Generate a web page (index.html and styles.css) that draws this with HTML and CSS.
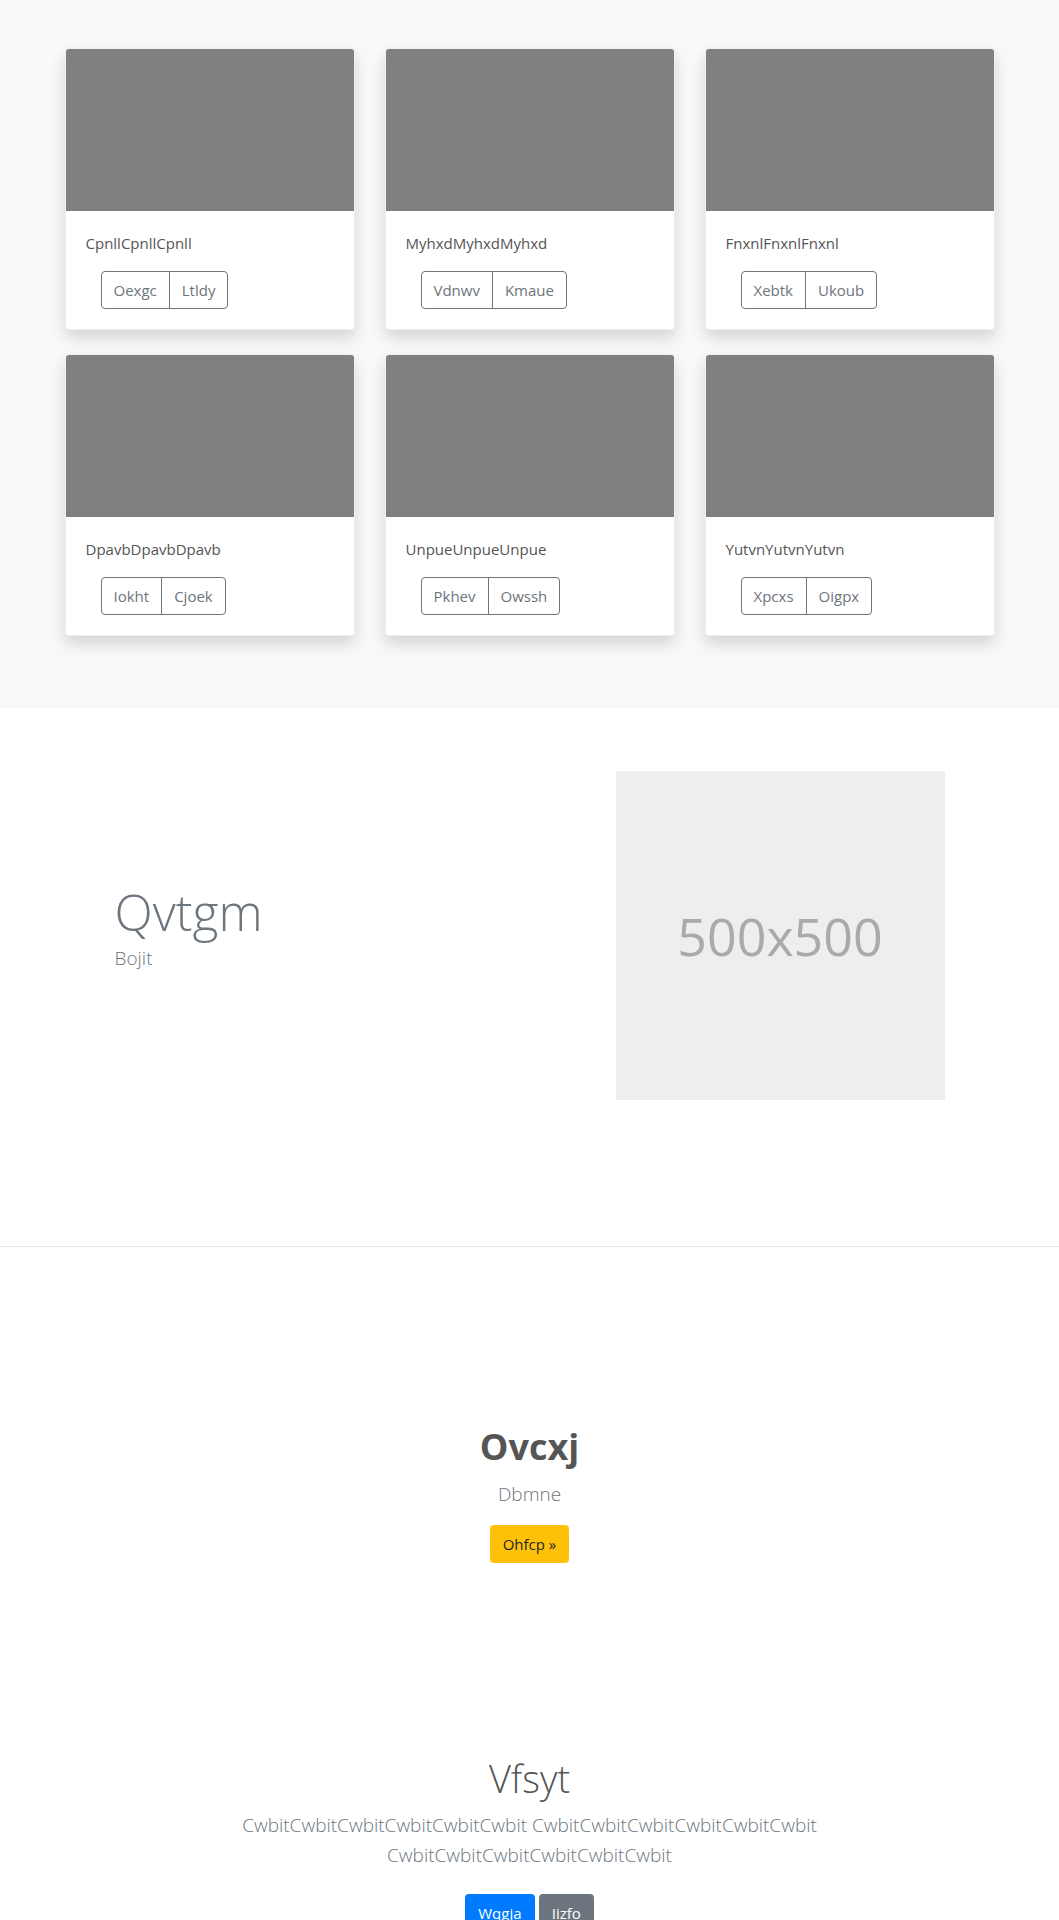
FILE: index.html
```html
<!DOCTYPE html>
<html lang="en">
<head>
    <meta charset="UTF-8">
    <meta name="viewport" content="width=device-width, initial-scale=1.0">
    <title>Album</title>
    <link rel="stylesheet" href="styles.css">
</head>
<body>

    <section class="album">
        <div class="container card-grid">
            <div class="card">
                <div class="card-img"></div>
                <div class="card-body">
                    <p class="card-text">CpnllCpnllCpnll</p>
                    <div class="btn-group">
                        <button class="btn btn-outline">Oexgc</button>
                        <button class="btn btn-outline">Ltldy</button>
                    </div>
                </div>
            </div>
            <div class="card">
                <div class="card-img"></div>
                <div class="card-body">
                    <p class="card-text">MyhxdMyhxdMyhxd</p>
                    <div class="btn-group">
                        <button class="btn btn-outline">Vdnwv</button>
                        <button class="btn btn-outline">Kmaue</button>
                    </div>
                </div>
            </div>
            <div class="card">
                <div class="card-img"></div>
                <div class="card-body">
                    <p class="card-text">FnxnlFnxnlFnxnl</p>
                    <div class="btn-group">
                        <button class="btn btn-outline">Xebtk</button>
                        <button class="btn btn-outline">Ukoub</button>
                    </div>
                </div>
            </div>
            <div class="card">
                <div class="card-img"></div>
                <div class="card-body">
                    <p class="card-text">DpavbDpavbDpavb</p>
                    <div class="btn-group">
                        <button class="btn btn-outline">Iokht</button>
                        <button class="btn btn-outline">Cjoek</button>
                    </div>
                </div>
            </div>
            <div class="card">
                <div class="card-img"></div>
                <div class="card-body">
                    <p class="card-text">UnpueUnpueUnpue</p>
                    <div class="btn-group">
                        <button class="btn btn-outline">Pkhev</button>
                        <button class="btn btn-outline">Owssh</button>
                    </div>
                </div>
            </div>
            <div class="card">
                <div class="card-img"></div>
                <div class="card-body">
                    <p class="card-text">YutvnYutvnYutvn</p>
                    <div class="btn-group">
                        <button class="btn btn-outline">Xpcxs</button>
                        <button class="btn btn-outline">Oigpx</button>
                    </div>
                </div>
            </div>
        </div>
    </section>

    <section class="feature">
        <div class="container feature-row">
            <div class="feature-text">
                <h2 class="feature-title">Qvtgm</h2>
                <p class="feature-sub">Bojit</p>
            </div>
            <div class="placeholder">500x500</div>
        </div>
    </section>

    <section class="cta">
        <h1 class="cta-title">Ovcxj</h1>
        <p class="lead">Dbmne</p>
        <a href="#" class="btn btn-warning">Ohfcp &raquo;</a>
    </section>

    <section class="jumbo">
        <div class="jumbo-inner">
            <h1 class="jumbo-title">Vfsyt</h1>
            <p class="lead">CwbitCwbitCwbitCwbitCwbitCwbit CwbitCwbitCwbitCwbitCwbitCwbit CwbitCwbitCwbitCwbitCwbitCwbit</p>
            <p class="jumbo-actions">
                <a href="#" class="btn btn-primary">Wqgja</a>
                <a href="#" class="btn btn-secondary">Iizfo</a>
            </p>
        </div>
    </section>

</body>
</html>
```

FILE: styles.css
```css
body {
    margin: 0;
    font-family: "Open Sans", "Noto Sans", sans-serif;
    font-size: 16px;
    line-height: 1.5;
    color: #212529;
    background: #fff;
}
h1, h2, p {
    margin: 0;
}
.container {
    width: 930px;
    margin: 0 auto;
}

/* album */
.album {
    background-color: #f8f9fa;
    padding: 48px 0 72px;
}
.card-grid {
    display: grid;
    grid-template-columns: repeat(3, 290px);
    column-gap: 30px;
    row-gap: 24px;
}
.card {
    background: #fff;
    border: 1px solid rgba(0, 0, 0, 0.06);
    border-radius: 4px;
    overflow: hidden;
    box-shadow: 0 8px 16px rgba(0, 0, 0, 0.15);
}
.card-img {
    height: 162px;
    background-color: #808080;
}
.card-body {
    padding: 20px;
}
.card-text {
    font-size: 15px;
    line-height: 24px;
    color: #555;
    margin-bottom: 16px;
}
.btn-group {
    display: inline-flex;
    margin-left: 15px;
}
.btn {
    display: inline-block;
    font-family: inherit;
    font-size: 15px;
    line-height: 24px;
    padding: 6px 12px;
    border: 1px solid transparent;
    border-radius: 4px;
    text-decoration: none;
    cursor: pointer;
}
.btn-outline {
    background: transparent;
    color: #6c757d;
    border-color: #6c757d;
}
.btn-group .btn:first-child {
    border-top-right-radius: 0;
    border-bottom-right-radius: 0;
}
.btn-group .btn:last-child {
    margin-left: -1px;
    border-top-left-radius: 0;
    border-bottom-left-radius: 0;
}

/* feature */
.feature {
    padding: 63px 0 146px;
    border-bottom: 1px solid #e5e5e5;
}
.feature-row {
    display: flex;
    align-items: center;
}
.feature-text {
    flex: 1;
    padding-left: 50px;
}
.feature-title {
    font-size: 50px;
    font-weight: 300;
    line-height: 1.2;
    color: #6c757d;
    margin-bottom: 2px;
}
.feature-sub {
    font-size: 19px;
    font-weight: 300;
    color: #6c757d;
    margin-bottom: 16px;
}
.placeholder {
    width: 329px;
    height: 329px;
    margin-right: 50px;
    background-color: #eee;
    color: #aaa;
    font-size: 52px;
    display: flex;
    align-items: center;
    justify-content: center;
}

/* call to action */
.cta {
    text-align: center;
    padding: 176px 0 0;
}
.cta-title {
    font-size: 36px;
    font-weight: 700;
    line-height: 48px;
    color: #555;
    margin-bottom: 8px;
}
.lead {
    font-size: 19px;
    font-weight: 300;
    line-height: 30px;
    color: #6c757d;
    margin-bottom: 16px;
}
.btn-warning {
    background-color: #ffc107;
    color: #212529;
}

/* jumbotron */
.jumbo {
    text-align: center;
    padding-top: 191px;
}
.jumbo-inner {
    width: 610px;
    margin: 0 auto;
}
.jumbo-title {
    font-size: 38px;
    font-weight: 300;
    line-height: 48px;
    color: #555;
    margin-bottom: 8px;
}
.jumbo .lead {
    margin-bottom: 24px;
}
.btn-primary {
    background-color: #007bff;
    color: #fff;
}
.btn-secondary {
    background-color: #6c757d;
    color: #fff;
}
```
